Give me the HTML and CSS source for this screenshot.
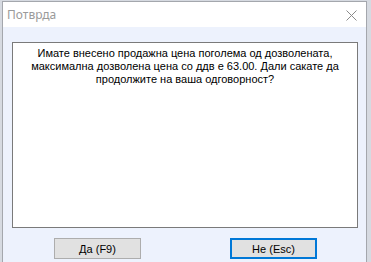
FILE: index.html
```html
<!DOCTYPE html>
<html lang="mk">
<head>
  <meta charset="UTF-8" />
  <title>Потврда</title>
  <link rel="stylesheet" href="styles.css">
</head>
<body>
  <div class="window">
    <div class="titlebar">
      <span class="title">Потврда</span>
      <svg class="close" width="11" height="11" viewBox="0 0 11 11">
        <path d="M0.5 0.5 L10.5 10.5 M10.5 0.5 L0.5 10.5" stroke="#8a8a8a" stroke-width="1" fill="none" />
      </svg>
    </div>
    <div class="content">
      <div class="message">
        Имате внесено продажна цена поголема од дозволената, максимална дозволена цена со ддв е 63.00. Дали сакате да продолжите на ваша одговорност?
      </div>
      <div class="buttons">
        <button class="btn">Да (F9)</button>
        <button class="btn btn-default">Не (Esc)</button>
      </div>
    </div>
  </div>
</body>
</html>
```

FILE: styles.css
```css
body {
  margin: 0;
  padding: 1px 0 0 2px;
  background: #d6dae1;
  height: 262px;
  overflow: hidden;
  box-sizing: border-box;
}

.window {
  width: 365px;
  height: 261px;
  border: 1px solid #a4a7ad;
  border-bottom: none;
  box-sizing: border-box;
  background: #edf2fd;
}

.titlebar {
  height: 25px;
  background: #ffffff;
  display: flex;
  align-items: center;
  justify-content: space-between;
  padding: 0 9px 0 4px;
}

.title {
  font-family: "Noto Sans", sans-serif;
  font-size: 12px;
  color: #9a9a9a;
}

.close {
  margin-top: 1px;
}

.content {
  padding: 15px 8px 0 9px;
}

.message {
  border: 1px solid #7a7a7a;
  background: #ffffff;
  padding: 4px 8px;
  box-sizing: border-box;
  height: 186px;
  font-family: "Liberation Sans", Arial, sans-serif;
  font-size: 11px;
  line-height: 13px;
  text-align: center;
  color: #000;
}

.buttons {
  display: flex;
  gap: 89px;
  margin-top: 10px;
  padding-left: 42px;
}

.btn {
  width: 87px;
  height: 21px;
  background: #e1e1e1;
  border: 1px solid #adadad;
  font-family: "Liberation Sans", Arial, sans-serif;
  font-size: 11px;
  color: #000;
  padding: 0;
}

.btn-default {
  border: 2px solid #0078d7;
}
```
